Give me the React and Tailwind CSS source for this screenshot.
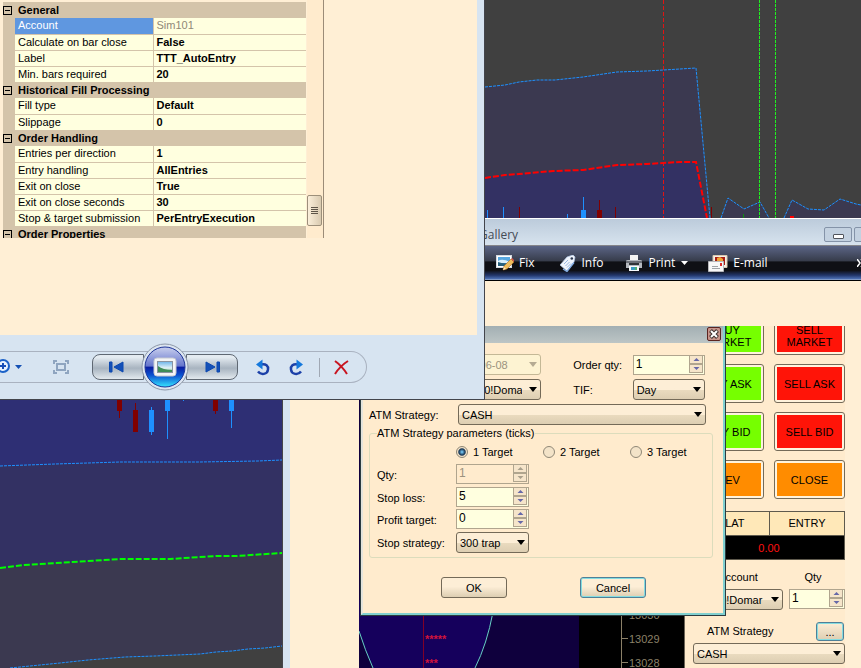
import React, { useState } from 'react';
import clsx from 'clsx';

const propertyGroups = [
  {
    name: 'General',
    rows: [
      { label: 'Account', value: 'Sim101', selected: true },
      { label: 'Calculate on bar close', value: 'False' },
      { label: 'Label', value: 'TTT_AutoEntry' },
      { label: 'Min. bars required', value: '20' },
    ],
  },
  {
    name: 'Historical Fill Processing',
    rows: [
      { label: 'Fill type', value: 'Default' },
      { label: 'Slippage', value: '0' },
    ],
  },
  {
    name: 'Order Handling',
    rows: [
      { label: 'Entries per direction', value: '1' },
      { label: 'Entry handling', value: 'AllEntries' },
      { label: 'Exit on close', value: 'True' },
      { label: 'Exit on close seconds', value: '30' },
      { label: 'Stop & target submission', value: 'PerEntryExecution' },
    ],
  },
  { name: 'Order Properties', rows: [] },
];

const tradeButtons = [
  { label: 'BUY MARKET', color: 'bg-[#76ff00]' },
  { label: 'SELL MARKET', color: 'bg-[#ff1408]' },
  { label: 'BUY ASK', color: 'bg-[#76ff00]' },
  { label: 'SELL ASK', color: 'bg-[#ff1408]' },
  { label: 'BUY BID', color: 'bg-[#76ff00]' },
  { label: 'SELL BID', color: 'bg-[#ff1408]' },
  { label: 'REV', color: 'bg-[#ff8c00]' },
  { label: 'CLOSE', color: 'bg-[#ff8c00]' },
];

const Select = ({ id, options, className, disabled, label }) => (
  <div className={clsx('relative h-[21px]', className)}>
    <select
      id={id}
      aria-label={label}
      disabled={disabled}
      className={clsx(
        'block h-full w-full appearance-none overflow-hidden rounded-[3px] border pl-[3px] pr-[18px] leading-[18px]',
        disabled
          ? 'border-[#c4b896] bg-[#fdf3d2] text-[#9b927e]'
          : 'border-[#746a58] bg-linear-to-b from-[#fdeed6] from-50% via-[#e9dabe] via-55% to-[#ddceb2] text-black'
      )}
    >
      {options.map((option) => (
        <option key={option}>{option}</option>
      ))}
    </select>
    <svg className="pointer-events-none absolute right-1 top-2 h-[5px] w-2" viewBox="0 0 8 5">
      <path d="M0 0h8L4 5z" fill={disabled ? '#b5ab93' : '#000'} />
    </svg>
  </div>
);

const Spinner = ({ id, initial, className, disabled, label }) => {
  const [value, setValue] = useState(initial);
  const arrow = disabled ? '#aaa08c' : '#6668a8';

  return (
    <div
      className={clsx(
        'flex h-5 border border-[#b0a58e]',
        disabled ? 'bg-[#ffebcd] text-[#9b927e]' : 'bg-[#ffffdf] text-black',
        className
      )}
    >
      <input
        id={id}
        aria-label={label}
        disabled={disabled}
        value={value}
        onChange={(e) => setValue(Number(e.target.value) || 0)}
        className="h-4 w-full min-w-0 flex-1 bg-transparent pl-[2px] text-[12px] leading-4 outline-none"
      />
      <div className="flex w-[15px] flex-col pb-px pr-px">
        <button
          aria-label="Increase"
          disabled={disabled}
          onClick={() => setValue(value + 1)}
          className="flex flex-1 items-center justify-center border border-t-0 border-[#b0a58e] bg-[#f6e5ca]"
        >
          <svg className="h-[3px] w-[7px]" viewBox="0 0 7 3">
            <path d="M.5 3h6L3.500 0z" fill={arrow} />
          </svg>
        </button>
        <button
          aria-label="Decrease"
          disabled={disabled}
          onClick={() => setValue(value - 1)}
          className="flex flex-1 items-center justify-center border border-[#b0a58e] bg-[#f6e5ca]"
        >
          <svg className="h-[3px] w-[7px]" viewBox="0 0 7 3">
            <path d="M.5 0h6L3.500 3z" fill={arrow} />
          </svg>
        </button>
      </div>
    </div>
  );
};

const PropertyGrid = () => (
  <div className="flex h-[238px] overflow-hidden pl-[3px] pt-[2px]">
    <table className="w-[303px] shrink-0 table-fixed border-collapse self-start text-[11px] leading-[15px]">
      <colgroup>
        <col className="w-3" />
        <col className="w-[138px]" />
        <col />
      </colgroup>
      {propertyGroups.map((group) => (
        <tbody key={group.name}>
          <tr className="h-4 bg-[#d4c4aa]">
            <td className="p-0">
              <button aria-label={`Collapse ${group.name}`} className="flex h-[9px] w-[9px] items-center justify-center border border-black">
                <span className="h-px w-[5px] bg-black" />
              </button>
            </td>
            <th colSpan={2} className="p-0 pl-[3px] text-left font-bold">
              {group.name}
            </th>
          </tr>
          {group.rows.map((row) => (
            <tr key={row.label} className="h-4 bg-[#ffffdf]">
              <td className="bg-[#d4c4aa] p-0" />
              <td
                className={clsx(
                  'whitespace-nowrap border-b border-r border-[#d4c4aa] p-0 pl-[3px]',
                  row.selected && 'bg-[#5f97e0] text-white'
                )}
              >
                {row.label}
              </td>
              <td
                className={clsx(
                  'border-b border-[#d4c4aa] p-0 pl-[3px]',
                  row.selected ? 'text-[#8f8878]' : 'font-bold'
                )}
              >
                {row.value}
              </td>
            </tr>
          ))}
        </tbody>
      ))}
    </table>
    <div className="-mt-[2px] ml-px flex w-[17px] flex-col justify-end border-r border-[#9c8c78] bg-[#ffebcd] pb-3 pr-px">
      <div className="flex h-[31px] flex-col items-center justify-center rounded-[2px] border border-[#9c8f7a] bg-linear-to-r from-[#fbefda] to-[#d9cab0]">
        {[0, 1, 2, 3].map((line) => (
          <span key={line} className="mb-px h-px w-[7px] bg-[#5d5548]" />
        ))}
      </div>
    </div>
  </div>
);

const ViewerControls = () => (
  <div className="mt-4 flex h-8 w-[367px] items-center rounded-r-full border border-l-0 border-[#a9b2c0]">
    <button aria-label="Zoom" className="w-6">
      <svg className="h-5 w-6" viewBox="0 0 24 20">
        <circle cx="3" cy="9" r="6" fill="#e8f4ff" stroke="#1c62c8" strokeWidth="2" />
        <path d="M0 9h6M3 6v6" stroke="#1850b8" strokeWidth="2" />
        <path d="M15 8h7l-3.500 4z" fill="#1450b4" />
      </svg>
    </button>
    <button aria-label="Actual size" className="ml-[29px]">
      <svg className="h-[14px] w-4" viewBox="0 0 16 14" fill="none" stroke="#8fa5c0" strokeWidth="2">
        <path d="M1 4V1h3M12 1h3v3M15 10v3h-3M4 13H1v-3" />
        <rect x="4" y="4" width="8" height="6" />
      </svg>
    </button>
    <button
      aria-label="Previous"
      className="ml-[23px] flex h-[26px] w-[52px] items-center justify-center rounded-l-lg border border-[#5f6873] bg-linear-to-b from-[#e4ebf1] from-10% via-[#a8b4c0] via-55% to-[#e2e9ee] pr-[3px]"
    >
      <svg className="h-3 w-[15px]" viewBox="0 0 15 12">
        <path d="M.5 1h2.500v10H.500zM14 1v10L5 6z" fill="#1450b8" stroke="#0c48b0" />
      </svg>
    </button>
    <button aria-label="Play slide show" className="relative z-10 -mx-[3px] -my-2 shrink-0">
      <svg className="h-12 w-12" viewBox="0 0 48 48">
        <defs>
          <linearGradient id="orb" x1="0" y1="0" x2="0" y2="1">
            <stop offset="0" stopColor="#c9d0ee" />
            <stop offset=".48" stopColor="#6474cc" />
            <stop offset=".5" stopColor="#0a1ca0" />
            <stop offset=".7" stopColor="#0a50d0" />
            <stop offset="1" stopColor="#35e6ff" />
          </linearGradient>
          <linearGradient id="photo" x1="0" y1="0" x2="0" y2="1">
            <stop offset="0" stopColor="#6cb4ea" />
            <stop offset=".6" stopColor="#e4f3f6" />
            <stop offset="1" stopColor="#4e9a60" />
          </linearGradient>
        </defs>
        <circle cx="24" cy="24" r="23" fill="#dce5f0" stroke="#8d98a8" />
        <circle cx="24" cy="24" r="20" fill="url(#orb)" stroke="#1c3498" />
        <rect x="13" y="15" width="22" height="18" rx="3" fill="#f3f4f6" stroke="#c6c9d0" />
        <rect x="16.500" y="18.500" width="15" height="11" fill="url(#photo)" stroke="#8a93a0" />
        <path d="M17 23q5 4 14 4v2H17z" fill="#3f8c58" />
      </svg>
    </button>
    <button
      aria-label="Next"
      className="flex h-[26px] w-[52px] items-center justify-center rounded-r-lg border border-[#5f6873] bg-linear-to-b from-[#e4ebf1] from-10% via-[#a8b4c0] via-55% to-[#e2e9ee]"
    >
      <svg className="h-3 w-[15px]" viewBox="0 0 15 12">
        <path d="M12 1h2.500v10H12zM1 1v10l9-5z" fill="#1450b8" stroke="#0c48b0" />
      </svg>
    </button>
    <button aria-label="Rotate left" className="ml-[17px]">
      <svg className="h-[17px] w-4" viewBox="0 0 16 17">
        <path d="M6 5.500C11 4.500 13.500 7 13 10.500 12.500 15.500 6 16.500 3 12.500" fill="none" stroke="#1c40a8" strokeWidth="2.500" />
        <path d="M1 5.500l6.500-5v10z" fill="#1478dc" />
      </svg>
    </button>
    <button aria-label="Rotate right" className="ml-[17px]">
      <svg className="h-[17px] w-4" viewBox="0 0 16 17">
        <path d="M10 5.500C5 4.500 2.500 7 3 10.500 3.500 15.500 10 16.500 13 12.500" fill="none" stroke="#1c40a8" strokeWidth="2.500" />
        <path d="M15 5.500L8.500 .5v10z" fill="#1478dc" />
      </svg>
    </button>
    <span className="ml-[15px] h-[19px] w-px bg-[#a0a8b4]" />
    <button aria-label="Delete" className="ml-[14px]">
      <svg className="h-[15px] w-[15px]" viewBox="0 0 15 15">
        <path d="M1 1q7 5 12 13M14 1Q6 6 1 14" fill="none" stroke="#c81420" strokeWidth="2" />
      </svg>
    </button>
  </div>
);

const PhotoViewer = () => (
  <section className="absolute left-0 top-0 z-30 flex h-[400px] w-[485px] flex-col border-b border-r border-[#43454c] bg-[#d7e4f1]">
    <div className="mr-[7px] h-[335px] bg-[#ffefd5]">
      <PropertyGrid />
    </div>
    <ViewerControls />
  </section>
);

const UpperChart = () => (
  <section className="absolute left-[485px] right-0 top-0 h-[218px] overflow-hidden bg-[#404040]">
    <svg className="h-[218px] w-[376px]" viewBox="0 0 376 218" fill="none">
      <path d="M0 87L20 85 34 82 52 80 70 80 98 77 132 72 162 71 195 69 211 68 225 218H0z" fill="#3b3950" />
      <path d="M0 178L20 175 34 174 68 171 98 170 132 165 162 164 195 162 211 162 222 218H0z" fill="#333163" />
      <path d="M236 218L243 198 259 209 275 202 284 218zM299 218L307 200 323 209 339 210 355 199 371 204 376 205V218z" fill="#3b3950" />
      <path d="M0 87L20 85 34 82 52 80 70 80 98 77 132 72 162 71 195 69 211 68 225 218M236 218L243 198 259 209 275 202 284 218M299 218L307 200 323 209 339 210 355 199 371 204 376 205" stroke="#1e90ff" strokeDasharray="3 1" />
      <path d="M0 178L20 175 34 174 68 171 98 170 132 165 162 164 195 162 211 162 222 218" stroke="#f00" strokeWidth="2" strokeDasharray="6 2" />
      <path d="M178.500 0V218" stroke="#e01414" strokeDasharray="4 2" />
      <path d="M274.500 0V218M290.500 0V218" stroke="#20f020" strokeDasharray="3 1" />
      <path d="M2.500 210v8M18.500 207v11M82.500 214v4M98.500 197v21" stroke="#1e90ff" />
      <path d="M34.500 207v11M114.500 200v18M130.500 207v11M226.500 207v11" stroke="#800000" />
      <path d="M96 210h5v8h-5z" fill="#1e90ff" />
      <path d="M112 210h5v8h-5z" fill="#800000" />
      <path d="M258.500 214v4" stroke="#109010" />
      <path d="M305 216h4v2h-4z" fill="#f00" />
    </svg>
  </section>
);

const LowerChart = () => (
  <section className="absolute bottom-0 left-0 top-[400px] w-[290px] overflow-hidden border-r-[7px] border-[#d7e4f1] bg-[#404040]">
    <svg className="h-[268px] w-[283px]" viewBox="0 0 283 268" fill="none">
      <path d="M0 0H282V246L248 249 232 251 216 252 200 254 155 256 125 257 88 260 40 265 10 268H0z" fill="#3b3950" />
      <path d="M0 0H282V154L236 156 216 157 170 160 120 160 88 162 24 166 0 169z" fill="#333163" />
      <path d="M0 0H282V60L258 61 200 62 120 62 88 63 55 64 0 66z" fill="#2e2f74" />
      <path d="M0 66L55 64 88 63 120 62 200 62 258 61 282 60" stroke="#1e90ff" strokeDasharray="3 1" />
      <path d="M10 268L40 265 60 263 88 260 125 257 155 256 200 254 216 252 232 251 248 249 265 248 282 246" stroke="#1e90ff" strokeDasharray="3 1" />
      <path d="M0 168L24 165 88 161 120 159 170 159 216 156 236 156 282 153" stroke="#0f0" strokeWidth="2" strokeDasharray="6 2" />
      <path d="M119.500 0v18M135.500 3v10M215.500 0v14" stroke="#800000" />
      <path d="M117 0h5v11h-5zM133 10h5v22h-5zM213 0h5v11h-5z" fill="#800000" />
      <path d="M151.500 7v28M167.500 0v39M231.500 0v28M183 .5h1" stroke="#1e90ff" />
      <path d="M149 10h5v22h-5zM165 0h5v11h-5zM229 0h5v11h-5z" fill="#1e90ff" />
      <path d="M282.500 0V268" stroke="#46464a" />
    </svg>
  </section>
);

const PriceLadder = () => (
  <section className="absolute bottom-0 left-[359px] top-[400px] z-10 w-[326px] overflow-hidden border-r border-[#6d6557] bg-black">
    <svg className="h-[268px] w-[325px]" viewBox="0 0 325 268" fill="none">
      <path d="M0 0H220V268H0z" fill="#0f003d" />
      <path d="M0 200V231Q6 250 14 268H116Q128 244 134 212V200z" fill="#15005c" />
      <path d="M0 231Q6 250 14 268M116 268Q128 244 134 212" stroke="#66d0c4" />
      <path d="M64.500 0V268" stroke="#800028" />
      <path d="M262.500 0V268M262 238.500h7M262 262.500h7" stroke="#8b8068" />
      <g fontFamily="Liberation Sans, sans-serif" fontSize="11" fill="#8b8068">
        <text x="270" y="219">13030</text>
        <text x="270" y="243">13029</text>
        <text x="270" y="267">13028</text>
      </g>
      <g fontFamily="Liberation Sans, sans-serif" fontSize="11" fontWeight="bold" fill="#d0143c">
        <text x="66" y="243">*****</text>
        <text x="66" y="267">***</text>
      </g>
    </svg>
  </section>
);

const FixIcon = () => (
  <svg className="h-[18px] w-[18px]" viewBox="0 0 18 18">
    <rect x=".5" y="1.500" width="15" height="12" fill="#fff" stroke="#d4dae0" />
    <path d="M2 3h12v9H2z" fill="#58a8e0" />
    <path d="M2 7q4-3 12 1v1H2z" fill="#d8eefa" />
    <path d="M2 8q5 2 12 1v3H2z" fill="#28607c" />
    <path d="M7 16l1-4 7-7 3 3-7 7z" fill="#eebc5c" stroke="#a86c24" strokeWidth=".6" />
    <path d="M15 5l1-1 2 2v2z" fill="#d85848" />
    <path d="M7 16l1-3 2 2z" fill="#f8e4c0" />
  </svg>
);

const InfoIcon = () => (
  <svg className="h-[17px] w-4" viewBox="0 0 16 17">
    <path d="M0 10L7 2l6-2 2 2-1 5-7 9z" fill="#f0f5fc" stroke="#b4cae8" strokeWidth=".7" />
    <path d="M4 9l4-4M5.500 11l4-4M7 12.500l4-4" stroke="#98b6e0" />
    <circle cx="11.800" cy="3.500" r="1.300" fill="#2c3850" />
    <path d="M3 14l4 2.500 7-9" fill="none" stroke="#84aee4" strokeWidth="1.300" />
  </svg>
);

const PrintIcon = () => (
  <svg className="h-4 w-4" viewBox="0 0 16 16">
    <path d="M4 0h8v6H4z" fill="#f4f4f4" />
    <path d="M0 6q0-1 2-1h12q2 0 2 1v7H0z" fill="#b4b8be" />
    <path d="M0 6h16v2H0z" fill="#6c7078" />
    <path d="M3 8h10v2H3z" fill="#303438" />
    <path d="M3 11h10v5H3z" fill="#f8fafc" />
    <path d="M5 12h4v3H5z" fill="#3c9cc4" />
    <path d="M9 12h2v3H9z" fill="#50b070" />
  </svg>
);

const MailIcon = () => (
  <svg className="h-[17px] w-5" viewBox="0 0 20 17">
    <path d="M5 .5h14v12H5z" fill="#f8f0e4" stroke="#d8c8b0" />
    <path d="M7 2h10v8H7z" fill="#a81c14" />
    <path d="M9 3l3-1 3 2v2H9z" fill="#f0a434" />
    <path d="M.5 6.500h15v10H.5z" fill="#f8f8f8" stroke="#b8b8bc" />
    <path d="M12 8h2v3h-2z" fill="#d82c28" />
    <path d="M4 11.500h6M4 13.500h8" stroke="#a0a4a8" />
  </svg>
);

const TradePanel = () => (
  <div className="w-[160px] overflow-hidden bg-[#ffebcd] pl-2 font-['Liberation_Sans',Arial,sans-serif] text-[11px]">
    <div className="-mt-[10px] grid grid-cols-2 gap-x-[10px] gap-y-[9px]">
      {tradeButtons.map((button) => (
        <button
          key={button.label}
          className="h-[39px] rounded-[3px] border border-[#746a58] bg-[#fff3dc] p-[2px] leading-3"
        >
          <span className={clsx('flex h-full items-center justify-center', button.color)}>{button.label}</span>
        </button>
      ))}
    </div>
    <div className="mt-3 border border-[#5f5a4d] text-center">
      <div className="grid h-[23px] grid-cols-[76px_1fr] bg-[#ffe8b8] leading-[23px]">
        <span className="border-r border-[#5f5a4d]">FLAT</span>
        <span>ENTRY</span>
      </div>
      <div className="h-6 border-t border-[#5f5a4d] bg-black leading-6 text-[#ff1010]">0.00</div>
    </div>
    <div className="mt-[9px] grid grid-cols-[90px_56px] gap-x-[6px] text-center">
      <label htmlFor="panelAccount" className="h-5 leading-4">Account</label>
      <label htmlFor="panelQty" className="h-5 pr-2 leading-4">Qty</label>
      <Select id="panelAccount" options={['Sim100!Domar']} className="[&>select]:-indent-2" />
      <Spinner id="panelQty" initial={1} className="text-left" />
    </div>
    <div className="mt-3 flex h-[19px] items-center justify-between pr-px">
      <label htmlFor="panelAtm" className="pl-[14px]">ATM Strategy</label>
      <button
        aria-label="Edit ATM strategy"
        className="h-[19px] w-7 rounded-[3px] border border-[#4f8098] bg-linear-to-b from-[#fdeed6] to-[#ddceb2] leading-3 ring-1 ring-inset ring-[#84dce0]"
      >
        ...
      </button>
    </div>
    <Select id="panelAtm" options={['CASH']} className="mt-[2px]" />
  </div>
);

const GalleryWindow = () => (
  <section className="absolute bottom-0 left-[485px] right-0 top-[218px] flex flex-col overflow-hidden font-['Open_Sans','Noto_Sans',sans-serif] text-[12px]">
    <div className="flex h-7 shrink-0 items-center justify-between border-b border-t border-b-[#85858a] border-t-white bg-linear-to-b from-[#bccbdb] to-[#d7e3ee]">
      <h1 className="-ml-[6px] pt-[6px] text-[#454b55]">Gallery</h1>
      <div className="-mr-[21px] flex gap-[2px] pt-1">
        <button aria-label="Minimize" className="flex h-[15px] w-7 items-end justify-center rounded-[2px] border border-[#8493a8] bg-[#c3d1e0] pb-[2px]">
          <span className="h-[5px] w-[11px] rounded-[1px] border border-[#50545c] bg-white" />
        </button>
        <button aria-label="Maximize" className="h-[15px] w-7 rounded-[2px] border border-[#8493a8] bg-[#c3d1e0]" />
      </div>
    </div>
    <nav className="flex h-[35px] shrink-0 items-center border-b border-black bg-[linear-gradient(#5b6586,#363b49_45%,#0f1015_46%,#0f1015_72%,#22366a_86%,#4a6cae_96%,#a0b4d4)] pl-[11px] text-white">
      <button className="flex items-center gap-[5px]">
        <FixIcon />
        Fix
      </button>
      <button className="ml-[25px] flex items-center gap-[6px]">
        <InfoIcon />
        Info
      </button>
      <button className="ml-[23px] flex items-center gap-[6px]">
        <PrintIcon />
        Print
        <svg className="h-1 w-[7px]" viewBox="0 0 7 4">
          <path d="M0 0h7L3.500 4z" fill="#fff" />
        </svg>
      </button>
      <button className="ml-5 flex items-center gap-[5px]">
        <MailIcon />
        E-mail
      </button>
      <button aria-label="More" className="-mr-1 ml-auto">
        <svg className="h-2 w-2" viewBox="0 0 8 8">
          <path d="M0 0l3 4-3 4M4 0l3 4-3 4" fill="none" stroke="#fff" strokeWidth="1.500" />
        </svg>
      </button>
    </nav>
    <div className="flex flex-1 justify-end bg-[#ffefd5] pr-4 pt-[45px]">
      <TradePanel />
    </div>
  </section>
);

const AtmDialog = () => {
  const [target, setTarget] = useState(1);

  return (
    <section
      role="dialog"
      aria-label="ATM strategy"
      className="absolute left-[360px] top-[326px] z-20 h-[290px] w-[366px] border border-t-0 border-[#2c3c40] bg-[#ffebcd] text-[11px]"
    >
      <div className="h-full border-2 border-t-0 border-l-[#e4e4dc] border-b-[#80d0d0] border-r-[#80d0d0]">
        <div className="flex h-[17px] items-start justify-end bg-linear-to-b from-[#a3afb3] to-[#bcc5c5] pr-[2px] pt-px">
          <button aria-label="Close" className="flex h-[14px] w-[14px] items-center justify-center rounded-[2px] border border-[#5c2420] bg-[#c8948a]">
            <svg className="h-[10px] w-[10px]" viewBox="0 0 10 10">
              <path d="M1.500 1.500l7 7M8.500 1.500l-7 7" stroke="#3c3030" strokeWidth="4" />
              <path d="M2 2l6 6M8 2L2 8" stroke="#fff" strokeWidth="2" />
            </svg>
          </button>
        </div>
        <div className="pl-[6px] pr-[10px] pt-[11px]">
          <div className="flex items-center pr-2">
            <Select label="Instrument" options={['YM 06-08']} disabled className="ml-[88px] w-[85px] [&>select]:pl-[2px]" />
            <label htmlFor="orderQty" className="ml-8 w-[60px] leading-4">Order qty:</label>
            <Spinner id="orderQty" initial={1} className="w-[73px]" />
          </div>
          <div className="mt-1 flex items-center pr-2">
            <Select label="Account" options={['Sim100!Domar']} className="ml-[88px] w-[85px] [&>select]:-indent-2" />
            <label htmlFor="tif" className="ml-8 w-[60px] leading-4">TIF:</label>
            <Select id="tif" options={['Day']} className="w-[73px]" />
          </div>
          <div className="mt-1 flex items-center pr-[7px]">
            <label htmlFor="atm" className="w-[89px] leading-4">ATM Strategy:</label>
            <Select id="atm" options={['CASH']} className="flex-1" />
          </div>
          <fieldset className="mt-[2px] min-w-0 rounded-[3px] border border-[#dcdcbc] px-[7px] pb-1">
            <legend className="leading-3">ATM Strategy parameters (ticks)</legend>
            <div className="flex pb-[5px] pl-[79px] pt-[6px]">
              {[1, 2, 3].map((count) => (
                <label key={count} className="flex w-[87px] items-center gap-[5px] leading-[14px] last:w-auto">
                  <input
                    type="radio"
                    name="targets"
                    checked={target === count}
                    onChange={() => setTarget(count)}
                    className="h-3 w-3 appearance-none rounded-full border border-[#8f8776] bg-[#f3e3c8] bg-radial checked:from-[#68b4e0] checked:from-10% checked:via-[#183450] checked:via-45% checked:to-[#f3e3c8] checked:to-60%"
                  />
                  {count} Target
                </label>
              ))}
            </div>
            <div className="grid grid-cols-[79px_73px] items-center gap-y-[2px] [&>label]:pt-[2px] [&>label]:leading-4">
              <label htmlFor="qty">Qty:</label>
              <Spinner id="qty" initial={1} disabled />
              <label htmlFor="stopLoss">Stop loss:</label>
              <Spinner id="stopLoss" initial={5} className="mt-px" />
              <label htmlFor="profitTarget">Profit target:</label>
              <Spinner id="profitTarget" initial={0} />
              <label htmlFor="stopStrategy">Stop strategy:</label>
              <Select id="stopStrategy" options={['300 trap']} className="mt-px" />
            </div>
          </fieldset>
          <div className="mt-[19px] flex gap-[73px] pl-[72px]">
            <button className="h-[21px] w-[66px] rounded-[3px] border border-[#746a58] bg-linear-to-b from-[#fdeed6] from-45% to-[#ddceb2] leading-3">
              OK
            </button>
            <button className="h-[21px] w-[66px] rounded-[3px] border border-[#4f8098] bg-linear-to-b from-[#fdeed6] from-45% to-[#ddceb2] leading-3 ring-1 ring-inset ring-[#84dce0]">
              Cancel
            </button>
          </div>
        </div>
      </div>
    </section>
  );
};

const App = () => {
  return (
    <main className="relative h-screen w-full overflow-hidden bg-[#ffefd5] font-['Liberation_Sans',Arial,sans-serif] text-black">
      <UpperChart />
      <GalleryWindow />
      <LowerChart />
      <PriceLadder />
      <AtmDialog />
      <PhotoViewer />
    </main>
  );
};

export default App;
